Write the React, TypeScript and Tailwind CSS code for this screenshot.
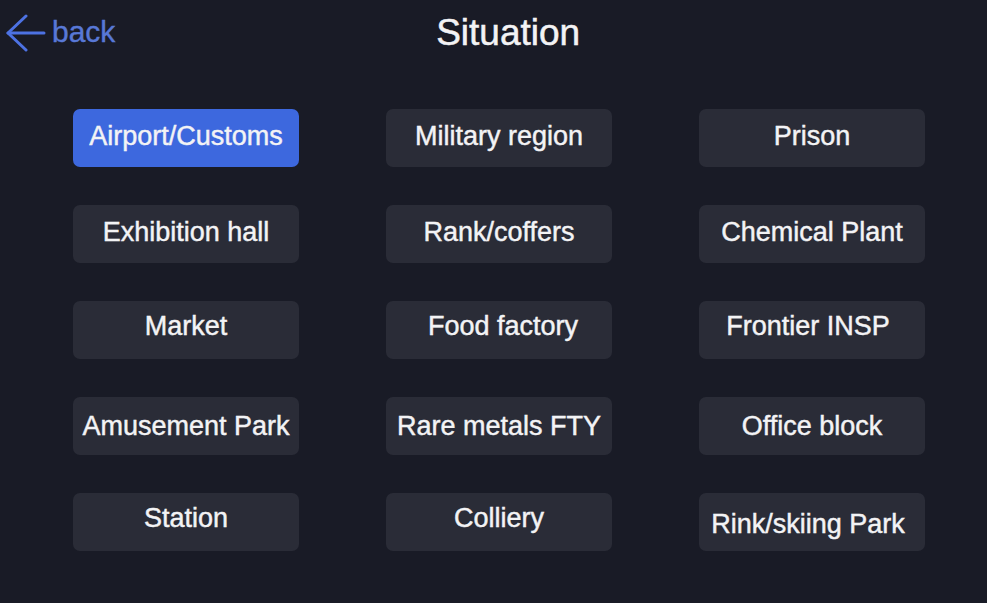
import React from 'react';

type Scene = { label: string; shift: string };

const scenes: Scene[] = [
    { label: 'Airport/Customs', shift: '-translate-y-0.5' },
    { label: 'Military region', shift: '-translate-y-0.5' },
    { label: 'Prison', shift: '-translate-y-0.5' },
    { label: 'Exhibition hall', shift: '-translate-y-0.5' },
    { label: 'Rank/coffers', shift: '-translate-y-0.5' },
    { label: 'Chemical Plant', shift: '-translate-y-0.5' },
    { label: 'Market', shift: '-translate-y-1' },
    { label: 'Food factory', shift: '-translate-y-1 translate-x-1' },
    { label: 'Frontier INSP', shift: '-translate-y-1 -translate-x-1' },
    { label: 'Amusement Park', shift: '' },
    { label: 'Rare metals FTY', shift: '' },
    { label: 'Office block', shift: '' },
    { label: 'Station', shift: '-translate-y-1' },
    { label: 'Colliery', shift: '-translate-y-1' },
    { label: 'Rink/skiing Park', shift: 'translate-y-0.5 -translate-x-1' },
];

function BackArrow() {
    return (
        <svg width="40" height="40" viewBox="0 0 40 40" fill="none" stroke="#4d72e3" strokeWidth="3" strokeLinecap="round" strokeLinejoin="round">
            <path d="M20 2 L2 19 L20 36" />
            <path d="M2 19 H38" />
        </svg>
    );
}

export default function App() {
    const active = 'Airport/Customs';

    return (
        <div className="w-[987px] h-[603px] overflow-hidden bg-[#191b26] text-[#f3f3f5] font-[family-name:'Liberation_Sans',Arial,sans-serif]">
            {/* header */}
            <div className="flex items-start h-[109px]">
                <button className="flex items-start ml-[6px] mt-[14px]">
                    <BackArrow />
                    <span className="ml-[6px] mt-[3px] text-[30px] leading-none text-[#5878d6] [-webkit-text-stroke:0.4px_#5878d6]">back</span>
                </button>
                <h1 className="flex-1 text-center mt-[14px] text-[37px] leading-none font-normal [-webkit-text-stroke:0.5px_#f3f3f5]">Situation</h1>
                <div className="w-[86px]" />
            </div>

            {/* scene grid */}
            <div className="grid grid-cols-[226px_226px_226px] gap-x-[87px] gap-y-[38px] pl-[73px]">
                {scenes.map(s => (
                    <button
                        key={s.label}
                        className={`h-[58px] rounded-[7px] flex items-center justify-center text-[27px] leading-none whitespace-nowrap [-webkit-text-stroke:0.45px_#f3f3f5] ${s.label === active ? 'bg-[#3d68de]' : 'bg-[#2a2c37]'}`}
                    >
                        <span className={s.shift}>{s.label}</span>
                    </button>
                ))}
            </div>
        </div>
    );
}
